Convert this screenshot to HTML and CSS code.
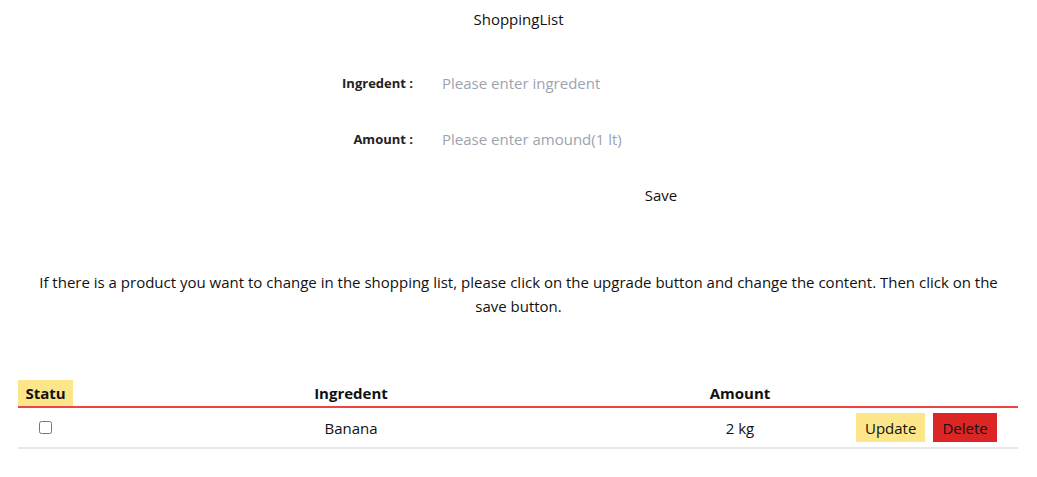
FILE: index.html
```html
<!DOCTYPE html>
<html>
<head>
<meta charset="utf-8">
<link rel="stylesheet" href="styles.css">
</head>
<body>
<h1 class="title">ShoppingList</h1>
<form class="form">
  <div class="row">
    <label class="label">Ingredent :</label>
    <input class="input" placeholder="Please enter ingredent">
  </div>
  <div class="row">
    <label class="label">Amount :</label>
    <input class="input" placeholder="Please enter amound(1 lt)">
  </div>
  <div class="row">
    <span class="label"></span>
    <div class="save-wrap"><button type="button" class="save">Save</button></div>
  </div>
</form>
<p class="info">If there is a product you want to change in the shopping list, please click on the upgrade button and change the content. Then click on the save button.</p>
<table class="list">
  <thead>
    <tr>
      <th class="c-status"><span class="statu">Statu</span></th>
      <th class="c-ing">Ingredent</th>
      <th class="c-amt">Amount</th>
      <th class="c-act"></th>
    </tr>
  </thead>
  <tbody>
    <tr>
      <td class="c-status"><input type="checkbox" class="check"></td>
      <td class="c-ing">Banana</td>
      <td class="c-amt">2 kg</td>
      <td class="c-act"><div class="actions"><button class="btn upd">Update</button><button class="btn del">Delete</button></div></td>
    </tr>
  </tbody>
</table>
</body>
</html>
```
FILE: styles.css
```css
* { box-sizing: border-box; }
body {
  margin: 0;
  font-family: "Open Sans", "Noto Sans", sans-serif;
  font-size: 15px;
  color: #111;
  background: #fff;
}
.title {
  margin: 0;
  padding-top: 8px;
  height: 55px;
  font-size: 15px;
  font-weight: 400;
  text-align: center;
  line-height: 22px;
}
.form { display: flex; flex-direction: column; }
.row {
  display: flex;
  align-items: center;
  height: 56px;
}
.label {
  width: 413px;
  text-align: right;
  font-size: 13px;
  font-weight: 700;
  color: #222;
}
.input {
  margin-left: 17px;
  width: 496px;
  border: none;
  outline: none;
  padding: 4px 12px;
  font-family: inherit;
  font-size: 15px;
  color: #111;
  background: transparent;
}
.input::placeholder { color: #9ca3af; }
.save-wrap {
  width: 496px;
  display: flex;
  justify-content: center;
}
.save {
  border: none;
  background: transparent;
  font-family: inherit;
  font-size: 15px;
  color: #111;
  padding: 4px 8px;
}
.info {
  margin: 47px 30px 0;
  text-align: center;
  line-height: 24px;
}
.list {
  margin: 62px 19px 0 18px;
  width: 1000px;
  border-collapse: collapse;
  table-layout: fixed;
}
.list th {
  font-weight: 700;
  font-size: 15px;
  padding: 0;
  height: 26px;
  text-align: center;
  border-bottom: 2px solid #ef4444;
}
.list td {
  padding: 0;
  height: 41px;
  text-align: center;
  border-bottom: 2px solid #e5e7eb;
}
.c-status { width: 55px; }
.c-ing { width: 556px; }
.c-amt { width: 222px; }
.c-act { width: 167px; }
.list th.c-status { text-align: left; }
.statu {
  display: block;
  background: #fde68a;
  height: 26px;
  line-height: 26px;
  text-align: center;
}
.check {
  margin: 0;
  width: 13px;
  height: 13px;
  vertical-align: middle;
  position: relative;
  top: -2px;
}
.actions {
  display: flex;
  gap: 8px;
  padding-left: 5px;
}
.btn {
  border: none;
  height: 29px;
  padding: 0 9px;
  font-family: inherit;
  font-size: 15px;
  color: #111;
}
.upd { background: #fde68a; }
.del { background: #dc2626; }
```
